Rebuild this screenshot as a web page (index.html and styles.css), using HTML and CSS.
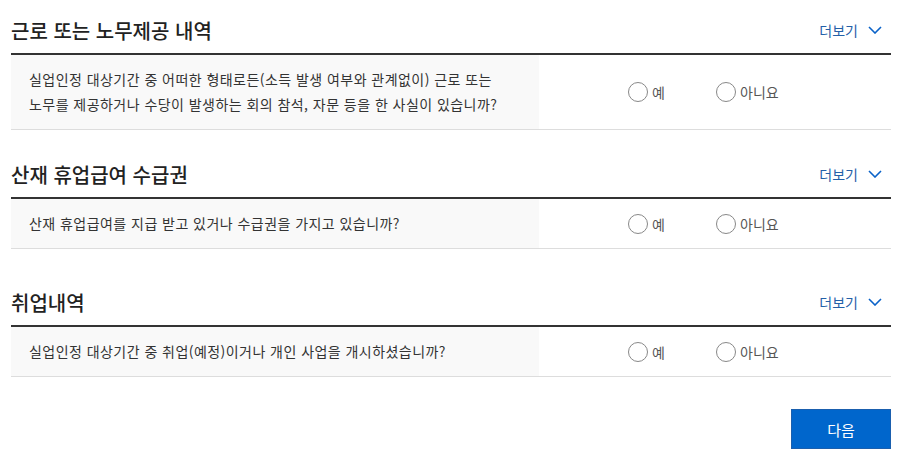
FILE: index.html
```html
<!DOCTYPE html>
<html lang="ko">
<head>
    <meta charset="UTF-8">
    <meta name="viewport" content="width=device-width, initial-scale=1.0">
    <title>실업인정 신청</title>
    <link rel="stylesheet" href="styles.css">
</head>
<body>
    <div class="container">
        <!-- 근로 또는 노무제공 -->
        <div class="section">
            <div class="section-head">
                <h2>근로 또는 노무제공 내역</h2>
                <a class="more" href="#">더보기
                    <svg width="14" height="8" viewBox="0 0 14 8"><path d="M1 1l6 6 6-6" fill="none" stroke="#0a62c8" stroke-width="1.6"/></svg>
                </a>
            </div>
            <div class="question">
                <div class="question-text">실업인정 대상기간 중 어떠한 형태로든(소득 발생 여부와 관계없이) 근로 또는<br>노무를 제공하거나 수당이 발생하는 회의 참석, 자문 등을 한 사실이 있습니까?</div>
                <div class="answers">
                    <label class="radio radio-yes"><span class="circle"></span>예</label>
                    <label class="radio"><span class="circle"></span>아니요</label>
                </div>
            </div>
        </div>

        <!-- 산재 휴업급여 -->
        <div class="section section-2">
            <div class="section-head">
                <h2>산재 휴업급여 수급권</h2>
                <a class="more" href="#">더보기
                    <svg width="14" height="8" viewBox="0 0 14 8"><path d="M1 1l6 6 6-6" fill="none" stroke="#0a62c8" stroke-width="1.6"/></svg>
                </a>
            </div>
            <div class="question">
                <div class="question-text">산재 휴업급여를 지급 받고 있거나 수급권을 가지고 있습니까?</div>
                <div class="answers">
                    <label class="radio radio-yes"><span class="circle"></span>예</label>
                    <label class="radio"><span class="circle"></span>아니요</label>
                </div>
            </div>
        </div>

        <!-- 취업내역 -->
        <div class="section section-3">
            <div class="section-head">
                <h2>취업내역</h2>
                <a class="more" href="#">더보기
                    <svg width="14" height="8" viewBox="0 0 14 8"><path d="M1 1l6 6 6-6" fill="none" stroke="#0a62c8" stroke-width="1.6"/></svg>
                </a>
            </div>
            <div class="question">
                <div class="question-text">실업인정 대상기간 중 취업(예정)이거나 개인 사업을 개시하셨습니까?</div>
                <div class="answers">
                    <label class="radio radio-yes"><span class="circle"></span>예</label>
                    <label class="radio"><span class="circle"></span>아니요</label>
                </div>
            </div>
        </div>

        <div class="actions">
            <button class="button">다음</button>
        </div>
    </div>
</body>
</html>
```

FILE: styles.css
```css
body {
    font-family: "Noto Sans CJK KR", "Noto Sans", sans-serif;
    margin: 0;
    padding: 0;
    background: white;
    color: #333;
}

.container {
    width: 880px;
    margin-left: 11px;
}

.section-2 {
    margin-top: 14px;
}

.section-3 {
    margin-top: 23px;
}

.section-head {
    display: flex;
    justify-content: space-between;
    align-items: center;
    height: 55px;
    padding-top: 7px;
    border-bottom: 2px solid #333;
    box-sizing: border-box;
}

.section-head h2 {
    margin: 0;
    font-size: 20px;
    font-weight: 500;
    color: #222;
}

.more {
    display: flex;
    align-items: center;
    gap: 10px;
    padding-right: 9px;
    font-size: 14px;
    color: #2460a8;
    text-decoration: none;
}

.question {
    display: flex;
    border-bottom: 1px solid #ddd;
}

.question-text {
    width: 528px;
    box-sizing: border-box;
    padding: 12px 18px;
    background: #f9f9f9;
    font-size: 14px;
    line-height: 25px;
    letter-spacing: 0.45px;
    color: #333;
}

.answers {
    display: flex;
    align-items: center;
    padding-left: 89px;
}

.radio {
    display: flex;
    align-items: center;
    gap: 4px;
    font-size: 14px;
    color: #555;
}

.radio-yes {
    width: 88px;
}

.circle {
    width: 18px;
    height: 18px;
    border: 1.5px solid #888;
    border-radius: 50%;
}

.actions {
    display: flex;
    justify-content: flex-end;
    margin-top: 32px;
}

.button {
    width: 100px;
    height: 40px;
    background: #0066cc;
    border: 1px solid #1a5fae;
    color: white;
    font-family: inherit;
    font-size: 15px;
    cursor: pointer;
}
```
